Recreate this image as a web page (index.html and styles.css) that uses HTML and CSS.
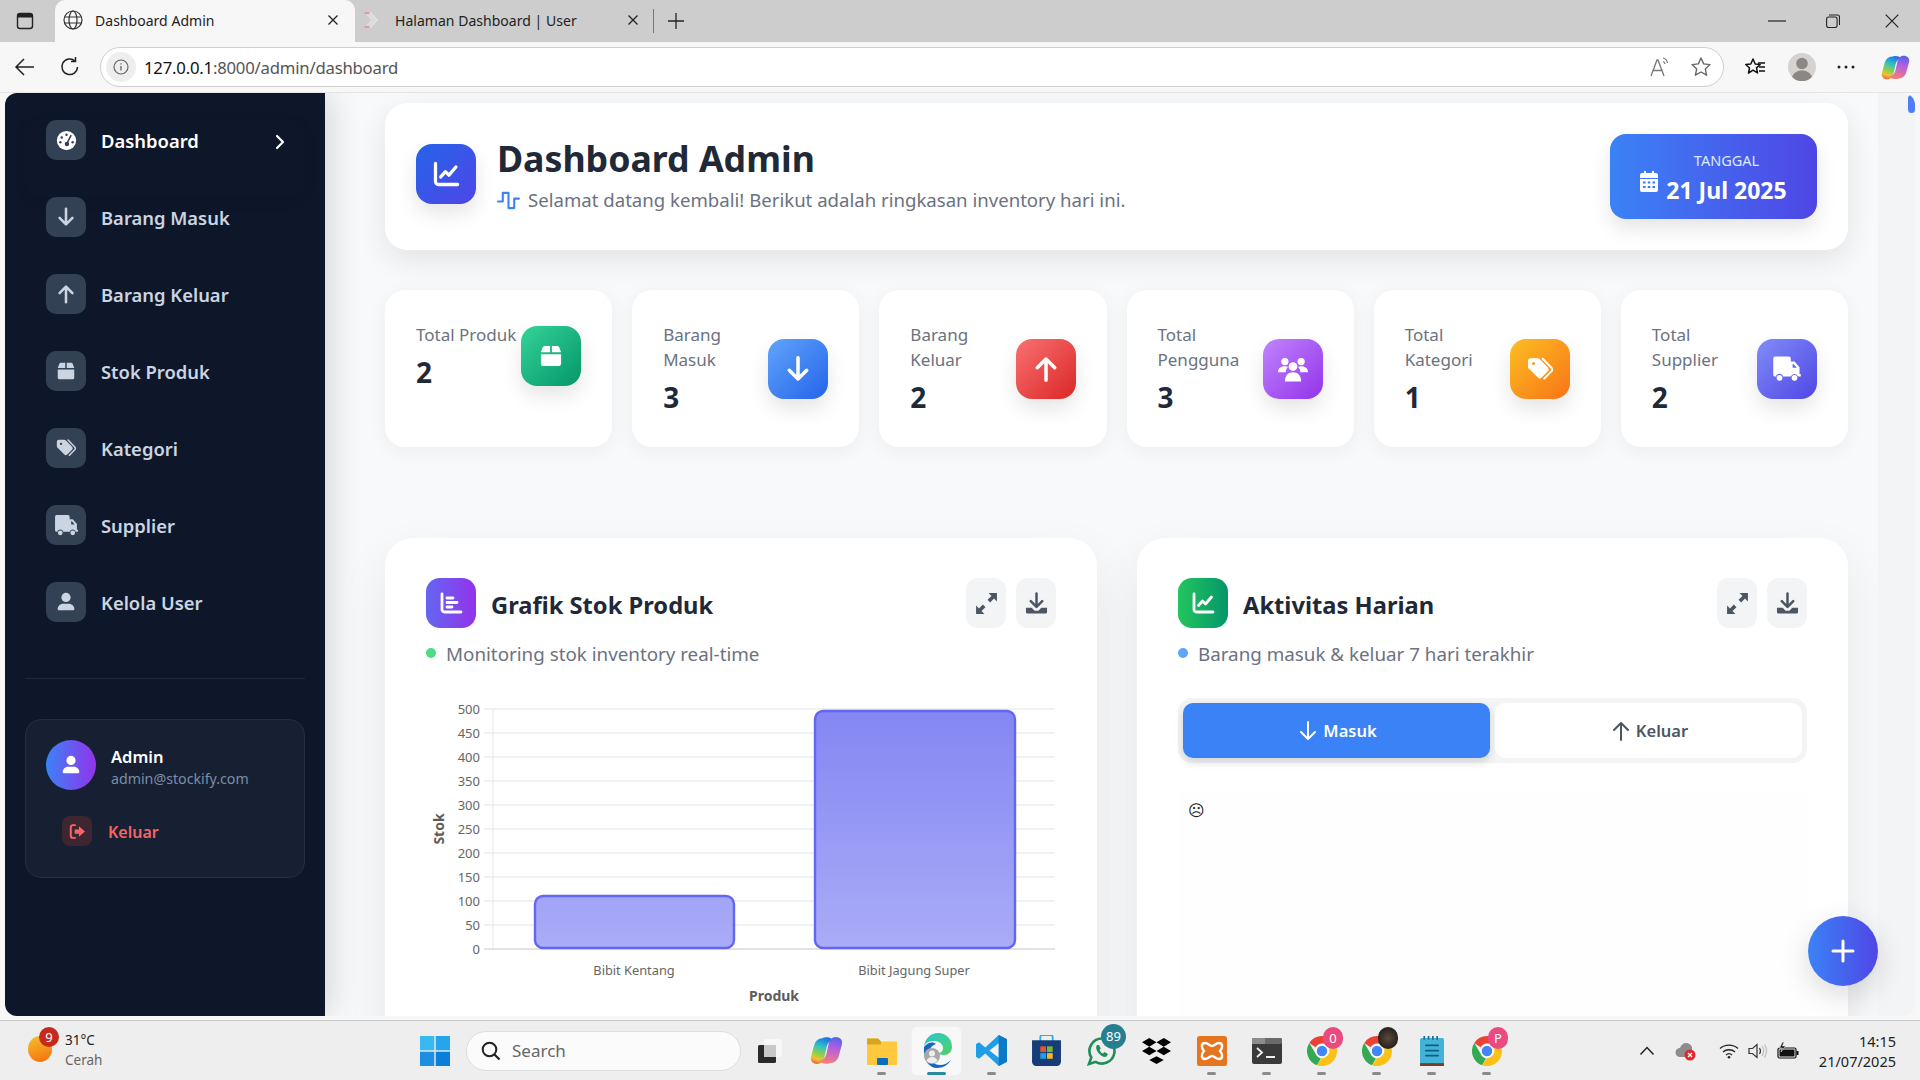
FILE: index.html
```html
<!DOCTYPE html>
<html lang="id">
<head>
<meta charset="utf-8">
<title>Dashboard Admin</title>
<link rel="stylesheet" href="styles.css">
</head>
<body>
<svg class="defs" width="0" height="0" aria-hidden="true">
  <defs>
    <symbol id="i-gauge" viewBox="0 0 24 24"><circle cx="12" cy="12" r="11" fill="currentColor"/><circle cx="12" cy="5.500" r="1.400" fill="#334155"/><circle cx="6.500" cy="8.500" r="1.400" fill="#334155"/><circle cx="5" cy="14" r="1.400" fill="#334155"/><circle cx="19" cy="14" r="1.400" fill="#334155"/><path d="M17 6.500 13.200 14" stroke="#334155" stroke-width="1.800" stroke-linecap="round"/><circle cx="12.500" cy="16" r="2.600" fill="#334155"/></symbol>
    <symbol id="i-down" viewBox="0 0 24 24"><path class="arrow" d="M12 3v17M5 13l7 7 7-7"/></symbol>
    <symbol id="i-up" viewBox="0 0 24 24"><path class="arrow" d="M12 21V4M5 11l7-7 7 7"/></symbol>
    <symbol id="i-box" viewBox="0 0 24 24"><path d="M5 1h6v7H1l2-5.500A2.500 2.500 0 0 1 5 1zM13 1h6a2.500 2.500 0 0 1 2 1.500L23 8H13zM1 10h22v10.500a2.500 2.500 0 0 1-2.500 2.500h-17A2.500 2.500 0 0 1 1 20.500z" fill="currentColor"/></symbol>
    <symbol id="i-tags" viewBox="0 0 24 24"><path d="M1 4.500A2.500 2.500 0 0 1 3.500 2h6.300c.7 0 1.300.3 1.800.7l7.700 7.800a2.500 2.500 0 0 1 0 3.500l-5.800 5.800a2.500 2.500 0 0 1-3.500 0l-7.800-7.700C1.300 11.600 1 11 1 10.300z" fill="currentColor"/><path d="m14.500 2.500 8 8.300a2.500 2.500 0 0 1 0 3.400l-6.500 6.600" fill="none" stroke="currentColor" stroke-width="1.800" stroke-linecap="round"/><circle cx="6" cy="7" r="1.400" fill="var(--hole,#334155)"/></symbol>
    <symbol id="i-truck" viewBox="0 0 24 24"><path d="M1 3.500A1.500 1.500 0 0 1 2.500 2h11A1.500 1.500 0 0 1 15 3.500V6h3l4 4.500V16h1v2h-2.200a3 3 0 0 0-5.700 0H8.900a3 3 0 0 0-5.800 0H2.500A1.500 1.500 0 0 1 1 16.500z" fill="currentColor"/><path d="M16.500 8v3h3.300l-2.600-3z" fill="var(--hole,#334155)"/><circle cx="6" cy="19" r="2.300" fill="currentColor"/><circle cx="18" cy="19" r="2.300" fill="currentColor"/></symbol>
    <symbol id="i-user" viewBox="0 0 24 24"><circle cx="12" cy="6.500" r="5.500" fill="currentColor"/><path d="M8.500 14h7c3.600 0 6.500 2.900 6.500 6.500 0 .8-.7 1.500-1.500 1.500h-17c-.8 0-1.500-.7-1.500-1.500C2 16.900 4.900 14 8.500 14z" fill="currentColor"/></symbol>
    <symbol id="i-users" viewBox="0 0 24 24"><circle cx="5.500" cy="6" r="2.900" fill="currentColor"/><circle cx="18.500" cy="6" r="2.900" fill="currentColor"/><path d="M0 14.500c0-3 2-4.800 5.500-4.800 1 0 1.800.2 2.500.6-1.200 1.100-1.800 2.500-1.800 4.200H0zM24 14.500c0-3-2-4.800-5.500-4.800-1 0-1.800.2-2.500.6 1.200 1.100 1.800 2.500 1.800 4.200H24z" fill="currentColor"/><circle cx="12" cy="10" r="3.500" fill="currentColor"/><path d="M5.500 22c0-5 2.600-7.500 6.500-7.500s6.500 2.500 6.500 7.500z" fill="currentColor"/></symbol>
    <symbol id="i-line" viewBox="0 0 24 24"><path d="M3 3v15.500A2.500 2.500 0 0 0 5.500 21H22" fill="none" stroke="currentColor" stroke-width="2.800" stroke-linecap="round"/><path d="m7.500 14.500 4-4.500 3 3 6-7" fill="none" stroke="currentColor" stroke-width="2.800" stroke-linecap="round" stroke-linejoin="round"/></symbol>
    <symbol id="i-bars" viewBox="0 0 24 24"><path d="M3 3v15.500A2.500 2.500 0 0 0 5.500 21H22" fill="none" stroke="currentColor" stroke-width="2.800" stroke-linecap="round"/><path d="M8 7h6M8 11.500h10M8 16h5" fill="none" stroke="currentColor" stroke-width="2.800" stroke-linecap="round"/></symbol>
    <symbol id="i-expand" viewBox="0 0 24 24"><path d="M14 2h8v8l-2.800-2.800-3.700 3.800-2.500-2.500 3.800-3.700zM10 22H2v-8l2.800 2.800 3.700-3.800 2.500 2.500-3.800 3.700z" fill="currentColor"/></symbol>
    <symbol id="i-download" viewBox="0 0 24 24"><path d="M12 1.500v13M6 9.500l6 6 6-6" fill="none" stroke="currentColor" stroke-width="2.600" stroke-linecap="round" stroke-linejoin="round"/><path d="M1 16.500h6l3 3h4l3-3h6v4.500a1.500 1.500 0 0 1-1.500 1.500h-19A1.500 1.500 0 0 1 1 21z" fill="currentColor"/></symbol>
    <symbol id="i-cal" viewBox="0 0 18 21"><path d="M4 0h2v2h6V0h2v2h2a2 2 0 0 1 2 2v3H0V4a2 2 0 0 1 2-2h2zM0 8h18v11a2 2 0 0 1-2 2H2a2 2 0 0 1-2-2zM3 10.500v2h2.500v-2zm4.800 0v2h2.500v-2zm4.700 0v2H15v-2zM3 15v2h2.500v-2zm4.800 0v2h2.500v-2zm4.700 0v2H15v-2z" fill="currentColor" fill-rule="evenodd"/></symbol>
    <symbol id="i-logout" viewBox="0 0 24 24"><path d="M8.500 3H5.500A3 3 0 0 0 2.500 6v12a3 3 0 0 0 3 3h3" fill="none" stroke="currentColor" stroke-width="2.800" stroke-linecap="round"/><path d="M14 4.500 22.500 12 14 19.500V15H8V9h6z" fill="currentColor"/></symbol>
    <symbol id="i-pulse" viewBox="0 0 24 20"><path d="M1 11h5V2h6v16h6V8h5" fill="none" stroke="currentColor" stroke-width="2.200" stroke-linecap="round" stroke-linejoin="round"/></symbol>
    <symbol id="i-chrome" viewBox="0 0 32 32"><path d="M16 1a15 15 0 0 1 13 7.500H16A7.500 7.500 0 0 0 9.500 12.300L3.300 8A15 15 0 0 1 16 1z" fill="#ea4335"/><path d="M3.300 8l6.300 10.800a7.500 7.500 0 0 0 5.300 4.600L11 30.200A15 15 0 0 1 3.300 8z" fill="#34a853"/><path d="M29 8.500A15 15 0 0 1 11 30.200l5-7.200a7.500 7.500 0 0 0 6.500-11.200z" fill="#fbc116"/><circle cx="16" cy="16" r="6" fill="#4285f4" stroke="#fff" stroke-width="1.500"/></symbol>
    <symbol id="i-copilot" viewBox="0 0 32 28"><path d="M12 2C14 1 18 1 20 2l4 2c-5 0-7 3-8 7l-2 9c-1 4-3 7-7 7-4 0-7-3-6-7L4 9C5 5 8 2 12 2z" fill="url(#cop)"/><path d="M20 26c-2 1-6 1-8 0l-4-2c5 0 7-3 8-7l2-9c1-4 3-7 7-7 4 0 7 3 6 7l-3 11c-1 4-4 7-8 7z" fill="url(#cop2)"/></symbol>
    <linearGradient id="barfill" gradientUnits="userSpaceOnUse" x1="0" y1="9" x2="0" y2="249"><stop offset="0" stop-color="#8486f3"/><stop offset="1" stop-color="#aaacf7"/></linearGradient>
    <linearGradient id="cop" x1=".6" y1="0" x2=".3" y2="1"><stop offset="0" stop-color="#1f6fe6"/><stop offset=".35" stop-color="#2fc0c8"/><stop offset=".65" stop-color="#8fd04a"/><stop offset=".85" stop-color="#f5c12e"/><stop offset="1" stop-color="#ef6a3c"/></linearGradient>
    <linearGradient id="cop2" x1=".6" y1="0" x2=".4" y2="1"><stop offset="0" stop-color="#5a63e6"/><stop offset=".4" stop-color="#b45ee0"/><stop offset="1" stop-color="#f57f7a"/></linearGradient>
    <linearGradient id="edgeg" x1="0" y1="0" x2="1" y2="1"><stop offset="0" stop-color="#2ec6d8"/><stop offset="1" stop-color="#4fd15f"/></linearGradient>
  </defs>
</svg>

<header class="tabstrip">
  <svg class="tabside" viewBox="0 0 20 20" width="20" height="20"><rect x="2.500" y="2.500" width="15" height="15" rx="2.500" fill="none" stroke="#222" stroke-width="1.400"/><path d="M2.500 6.500V5A2.500 2.500 0 0 1 5 2.500h10A2.500 2.500 0 0 1 17.500 5v1.500z" fill="#222"/></svg>
  <div class="tab tab-active">
    <svg viewBox="0 0 20 20" width="20" height="20"><g fill="none" stroke="#333" stroke-width="1.200"><circle cx="10" cy="10" r="9"/><ellipse cx="10" cy="10" rx="4" ry="9"/><path d="M1.500 7h17M1.500 13h17"/></g></svg>
    <span class="tab-title">Dashboard Admin</span>
    <svg class="tab-x" viewBox="0 0 12 12" width="12" height="12"><path d="M1.500 1.500l9 9M10.500 1.500l-9 9" stroke="#222" stroke-width="1.300"/></svg>
  </div>
  <div class="tab">
    <svg viewBox="0 0 20 20" width="20" height="20"><path d="M1 2h7l7 8-7 8H1l7-8z" fill="#dcdcdc"/><path d="M8 2l7 8-7 8h-2l7-8-7-8z" fill="#e0e0e0"/><path d="M1 2h5l1 2H2zM1 18h5l1-2H2z" fill="#e59a9a"/></svg>
    <span class="tab-title">Halaman Dashboard | User</span>
    <svg class="tab-x" viewBox="0 0 12 12" width="12" height="12"><path d="M1.500 1.500l9 9M10.500 1.500l-9 9" stroke="#222" stroke-width="1.300"/></svg>
  </div>
  <span class="tab-sep"></span>
  <svg class="tab-new" viewBox="0 0 18 18" width="18" height="18"><path d="M9 1v16M1 9h16" stroke="#222" stroke-width="1.300"/></svg>
  <div class="winctl">
    <svg class="win-min" viewBox="0 0 20 14" width="20" height="14"><path d="M1 7h18" stroke="#222" stroke-width="1.200"/></svg>
    <svg viewBox="0 0 14 14" width="14" height="14"><rect x=".6" y="3" width="10.500" height="10.500" rx="2" fill="none" stroke="#222" stroke-width="1.100"/><path d="M3 1h8.500A2 2 0 0 1 13.500 3v8" fill="none" stroke="#222" stroke-width="1.100"/></svg>
    <svg viewBox="0 0 14 14" width="14" height="14"><path d="M.7.7l12.600 12.600M13.300.7.700 13.300" stroke="#222" stroke-width="1.200"/></svg>
  </div>
</header>

<nav class="toolbar">
  <svg class="tb-back" viewBox="0 0 22 22" width="22" height="22"><path d="M20 11H2M10 3l-8 8 8 8" fill="none" stroke="#222" stroke-width="1.500"/></svg>
  <svg class="tb-reload" viewBox="0 0 22 22" width="22" height="22"><path d="M18.500 11a7.800 7.800 0 1 1-2.500-6M16.500 1v4.500H12" fill="none" stroke="#222" stroke-width="1.500"/></svg>
  <div class="omnibox">
    <span class="omni-info"><svg viewBox="0 0 16 16" width="16" height="16"><circle cx="8" cy="8" r="7" fill="none" stroke="#666" stroke-width="1.200"/><path d="M8 7v4.500M8 4.200v1.400" stroke="#666" stroke-width="1.300"/></svg></span>
    <span class="url"><span class="url-host">127.0.0.1</span>:8000/admin/dashboard</span>
    <svg class="omni-read" viewBox="0 0 22 20" width="22" height="20"><path d="M1 19 7 3h1l6 16M3.500 13.500h8" fill="none" stroke="#777" stroke-width="1.300"/><path d="M13 1c2.500.6 4 2.200 4.500 5M13 4.500c1.200.3 1.800 1 2 2.500" fill="none" stroke="#777" stroke-width="1.200"/></svg>
    <svg class="omni-star" viewBox="0 0 22 22" width="22" height="22"><path d="m11 2 2.700 5.900 6.300.7-4.700 4.300 1.300 6.300L11 16l-5.600 3.200 1.300-6.300L2 8.600l6.300-.7z" fill="none" stroke="#666" stroke-width="1.400" stroke-linejoin="round"/></svg>
  </div>
  <svg class="tool-fav" viewBox="0 0 22 22" width="22" height="22"><path d="m9 3 2.200 5 5 .5-3.700 3.400 1 5L9 14.200 4.500 17l1-5L1.800 8.500l5-.5z" fill="none" stroke="#111" stroke-width="1.500" stroke-linejoin="round"/><path d="M14 7h7M15 11h6M15 15h6" stroke="#111" stroke-width="1.400"/></svg>
  <span class="tool-profile"><svg viewBox="0 0 28 28" width="28" height="28"><circle cx="14" cy="14" r="14" fill="#d5d3cf"/><circle cx="14" cy="10.500" r="5.800" fill="#8b8782"/><path d="M4 24c2-5 6-6.500 10-6.500S22 19 24 24a14 14 0 0 1-20 0z" fill="#8b8782"/></svg></span>
  <svg class="tool-more" viewBox="0 0 18 6" width="18" height="6"><circle cx="2" cy="3" r="1.500" fill="#222"/><circle cx="9" cy="3" r="1.500" fill="#222"/><circle cx="16" cy="3" r="1.500" fill="#222"/></svg>
  <svg class="tool-copilot" width="29" height="27"><use href="#i-copilot"/></svg>
</nav>

<div class="viewport">
  <aside class="sidebar">
    <ul class="menu">
      <li class="menu-item menu-active"><span class="menu-ic"><svg width="21" height="21"><use href="#i-gauge"/></svg></span><span class="menu-label">Dashboard</span><svg class="menu-chev" viewBox="0 0 10 16" width="10" height="16"><path d="m2 2 6 6-6 6" fill="none" stroke="#fff" stroke-width="2.200" stroke-linecap="round" stroke-linejoin="round"/></svg></li>
      <li class="menu-item"><span class="menu-ic"><svg width="22" height="22"><use href="#i-down"/></svg></span><span class="menu-label">Barang Masuk</span></li>
      <li class="menu-item"><span class="menu-ic"><svg width="22" height="22"><use href="#i-up"/></svg></span><span class="menu-label">Barang Keluar</span></li>
      <li class="menu-item"><span class="menu-ic"><svg width="18" height="18"><use href="#i-box"/></svg></span><span class="menu-label">Stok Produk</span></li>
      <li class="menu-item"><span class="menu-ic"><svg width="20" height="20"><use href="#i-tags"/></svg></span><span class="menu-label">Kategori</span></li>
      <li class="menu-item"><span class="menu-ic"><svg width="25" height="25"><use href="#i-truck"/></svg></span><span class="menu-label">Supplier</span></li>
      <li class="menu-item"><span class="menu-ic"><svg width="20" height="20"><use href="#i-user"/></svg></span><span class="menu-label">Kelola User</span></li>
    </ul>
    <div class="side-div"></div>
    <div class="user-card">
      <div class="user-row">
        <span class="avatar"><svg width="20" height="20"><use href="#i-user"/></svg></span>
        <div class="user-text"><div class="user-name">Admin</div><div class="user-mail">admin@stockify.com</div></div>
      </div>
      <div class="logout"><span class="logout-ic"><svg width="17" height="17"><use href="#i-logout"/></svg></span><span>Keluar</span></div>
    </div>
  </aside>

  <main class="main">
    <section class="hero">
      <span class="hero-ic"><svg width="28" height="28"><use href="#i-line"/></svg></span>
      <div class="hero-text">
        <h1>Dashboard Admin</h1>
        <p><svg width="23" height="19"><use href="#i-pulse"/></svg><span>Selamat datang kembali! Berikut adalah ringkasan inventory hari ini.</span></p>
      </div>
      <div class="date-chip">
        <svg width="18" height="21"><use href="#i-cal"/></svg>
        <div class="date-text"><div class="date-cap">TANGGAL</div><div class="date-val">21 Jul 2025</div></div>
      </div>
    </section>

    <section class="stats">
      <article class="stat"><div class="stat-row"><div class="stat-text"><div class="stat-label">Total Produk</div><div class="stat-val">2</div></div><span class="stat-ic g-green"><svg width="22" height="22"><use href="#i-box"/></svg></span></div></article>
      <article class="stat"><div class="stat-row"><div class="stat-text"><div class="stat-label">Barang Masuk</div><div class="stat-val">3</div></div><span class="stat-ic g-blue"><svg width="30" height="30"><use href="#i-down"/></svg></span></div></article>
      <article class="stat"><div class="stat-row"><div class="stat-text"><div class="stat-label">Barang Keluar</div><div class="stat-val">2</div></div><span class="stat-ic g-red"><svg width="30" height="30"><use href="#i-up"/></svg></span></div></article>
      <article class="stat"><div class="stat-row"><div class="stat-text"><div class="stat-label">Total Pengguna</div><div class="stat-val">3</div></div><span class="stat-ic g-purple"><svg width="30" height="30"><use href="#i-users"/></svg></span></div></article>
      <article class="stat"><div class="stat-row"><div class="stat-text"><div class="stat-label">Total Kategori</div><div class="stat-val">1</div></div><span class="stat-ic g-orange"><svg width="26" height="26"><use href="#i-tags"/></svg></span></div></article>
      <article class="stat"><div class="stat-row"><div class="stat-text"><div class="stat-label">Total Supplier</div><div class="stat-val">2</div></div><span class="stat-ic g-indigo"><svg width="30" height="30"><use href="#i-truck"/></svg></span></div></article>
    </section>

    <section class="charts">
      <article class="chart-card">
        <div class="chart-head">
          <span class="chart-ic g-violet"><svg width="24" height="24"><use href="#i-bars"/></svg></span>
          <h2>Grafik Stok Produk</h2>
          <div class="chart-btns"><span class="cbtn"><svg width="25" height="25"><use href="#i-expand"/></svg></span><span class="cbtn"><svg width="23" height="23"><use href="#i-download"/></svg></span></div>
        </div>
        <p class="chart-sub"><i class="dot dot-green"></i>Monitoring stok inventory real-time</p>
        <svg class="stock-chart" viewBox="0 0 630 310" width="630" height="310">
          <g stroke="#eceded" stroke-width="1.300">
            <path d="M58 9H629M58 33H629M58 57H629M58 81H629M58 105H629M58 129H629M58 153H629M58 177H629M58 201H629M58 225H629"/>
            <path d="M67 9V249"/>
          </g>
          <path d="M58 249H629" stroke="#d9dadc" stroke-width="1.300"/>
          <g class="axis-y" text-anchor="end">
            <text x="54" y="14">500</text><text x="54" y="38">450</text><text x="54" y="62">400</text><text x="54" y="86">350</text><text x="54" y="110">300</text><text x="54" y="134">250</text><text x="54" y="158">200</text><text x="54" y="182">150</text><text x="54" y="206">100</text><text x="54" y="230">50</text><text x="54" y="254">0</text>
          </g>
          <rect x="109" y="196" width="199" height="52" rx="8" fill="url(#barfill)" stroke="#6366f1" stroke-width="2.400"/>
          <rect x="389" y="11" width="200" height="237" rx="8" fill="url(#barfill)" stroke="#6366f1" stroke-width="2.400"/>
          <g class="axis-x" text-anchor="middle"><text x="208" y="275">Bibit Kentang</text><text x="488" y="275">Bibit Jagung Super</text></g>
          <text class="axis-t" x="348" y="301" text-anchor="middle">Produk</text>
          <text class="axis-t" transform="translate(18 129) rotate(-90)" text-anchor="middle">Stok</text>
        </svg>
      </article>

      <article class="chart-card">
        <div class="chart-head">
          <span class="chart-ic g-emerald"><svg width="24" height="24"><use href="#i-line"/></svg></span>
          <h2>Aktivitas Harian</h2>
          <div class="chart-btns"><span class="cbtn"><svg width="25" height="25"><use href="#i-expand"/></svg></span><span class="cbtn"><svg width="23" height="23"><use href="#i-download"/></svg></span></div>
        </div>
        <p class="chart-sub"><i class="dot dot-blue"></i>Barang masuk &amp; keluar 7 hari terakhir</p>
        <div class="toggle">
          <button class="tg tg-on"><svg width="24" height="24"><use href="#i-down"/></svg>Masuk</button>
          <button class="tg"><svg width="24" height="24"><use href="#i-up"/></svg>Keluar</button>
        </div>
        <div class="empty-chart">☹</div>
      </article>
    </section>
  </main>

  <div class="scrolltrack"><span class="thumb"></span></div>
  <button class="fab"><svg viewBox="0 0 24 24" width="24" height="24"><path d="M12 2v20M2 12h20" stroke="#fff" stroke-width="3" stroke-linecap="round"/></svg></button>
</div>

<footer class="taskbar">
  <div class="weather">
    <span class="sun"></span><span class="sun-badge">9</span>
    <div class="weather-text"><div>31°C</div><div class="muted">Cerah</div></div>
  </div>
  <svg class="winlogo" viewBox="0 0 30 30" width="30" height="30"><path d="M0 0h14.300v14.300H0z" fill="#38b9f0"/><path d="M15.700 0H30v14.300H15.700z" fill="#27a5ea"/><path d="M0 15.700h14.300V30H0z" fill="#1c8fe0"/><path d="M15.700 15.700H30V30H15.700z" fill="#0a7fd8"/></svg>
  <div class="search"><svg viewBox="0 0 20 20" width="20" height="20"><circle cx="8.500" cy="8.500" r="6.800" fill="none" stroke="#222" stroke-width="2"/><path d="m13.500 13.500 5 5" stroke="#222" stroke-width="2.200"/></svg><span>Search</span></div>
  <div class="apps">
    <span class="app app-first"><svg viewBox="0 0 24 24" width="24" height="24"><rect x="0" y="6" width="18" height="18" rx="1.500" fill="#2a2a2a"/><rect x="6" y="0" width="18" height="18" rx="1.500" fill="#f8f8f8" opacity=".9"/><rect x="6" y="6" width="12" height="12" fill="#c8c8c8"/></svg></span>
    <span class="app app-second"><svg width="33" height="31"><use href="#i-copilot"/></svg></span>
    <span class="app app-on"><svg viewBox="0 0 30 28" width="30" height="28"><path d="M0 1.500h11l3 3h16V28H0z" fill="#ffc83d"/><path d="M0 1.500h11l3 3v3H0z" fill="#d9a520"/><rect x="10" y="21" width="11" height="7" rx="1" fill="#0c6cc0"/></svg></span>
    <span class="app app-edge app-on"><svg viewBox="0 0 30 36" width="30" height="36"><path d="M2 14C3 5 9 0 16 0c8 0 14 6 14 14 0 5-4 8-8 8-3 0-5-1-6-2 3 0 5-2 5-5 0-4-4-7-9-7C7 8 3 10 2 14z" fill="url(#edgeg)"/><path d="M2 14c3-4 8-6 12-3-4 1-7 5-7 10 0 6 5 11 11 11 4 0 8-2 11-5-3 5-8 8-14 8C7 35 1 27 2 14z" fill="#1667c5"/><circle cx="10" cy="23" r="8" fill="#a8a8a8"/><circle cx="10" cy="20.500" r="3" fill="#eee"/><path d="M4.500 28c1-3 3-4 5.500-4s4.500 1 5.500 4a8 8 0 0 1-11 0z" fill="#eee"/></svg></span>
    <span class="app app-on"><svg viewBox="0 0 30 30" width="31" height="31"><path d="M22 0 30 4v22l-8 4-13-12-6 5-3-2v-12l3-2 6 5z" fill="#1e9de8"/><path d="M22 8v14l-9-7z" fill="#f2f2f2"/><path d="M22 0l8 4v22l-8 4z" fill="#0b79c6"/></svg></span>
    <span class="app"><svg viewBox="0 0 28 30" width="29" height="31"><path d="M8 6V2a2 2 0 0 1 2-2h8a2 2 0 0 1 2 2v4" fill="none" stroke="#2db0e6" stroke-width="1.800"/><path d="M0 5h28v21a4 4 0 0 1-4 4H4a4 4 0 0 1-4-4z" fill="#173d78"/><rect x="8" y="11" width="5.500" height="5.500" fill="#e8542a"/><rect x="14.500" y="11" width="5.500" height="5.500" fill="#7cb82a"/><rect x="8" y="17.500" width="5.500" height="5.500" fill="#1da1e4"/><rect x="14.500" y="17.500" width="5.500" height="5.500" fill="#f8b81e"/></svg></span>
    <span class="app"><svg viewBox="0 0 30 30" width="30" height="30"><path d="M15 2.500a12.500 12.500 0 0 0-10.700 19L2 28l6.700-2.200A12.500 12.500 0 1 0 15 2.500z" fill="none" stroke="#1f8d57" stroke-width="2.600"/><path d="M10 9c-1.500 2-1 5 2 8.500s6 4 7.500 3l1.500-2.500-3.500-2-1.500 1.500c-1.500-.5-3-2-3.500-3.500l1.300-1.500-1.800-3.500z" fill="#1f8d57"/></svg><span class="app-badge b-teal">89</span></span>
    <span class="app"><svg viewBox="0 0 32 30" width="29" height="26" preserveAspectRatio="none"><path d="M8 0l8 5-8 5-8-5zM24 0l8 5-8 5-8-5zM8 10l8 5-8 5-8-5zM24 10l8 5-8 5-8-5zM16 21l8 4.500-8 4.500-8-4.500z" fill="#000"/></svg></span>
    <span class="app app-on"><svg viewBox="0 0 30 30" width="30" height="30"><rect width="30" height="30" rx="2.500" fill="#e5761f"/><path d="M8 7c3 0 4.500 3 7 3s4-3 7-3c4 0 4 5 1 8 3 3 3 8-1 8-3 0-4.500-3-7-3s-4 3-7 3c-4 0-4-5-1-8-3-3-3-8 1-8z" fill="none" stroke="#fff" stroke-width="2.400"/></svg></span>
    <span class="app app-on"><svg viewBox="0 0 30 26" width="30" height="26"><rect width="30" height="26" rx="2" fill="#3a3a3a"/><rect width="30" height="6" rx="2" fill="#6a6a6a"/><rect width="13" height="6" fill="#8c8c8c"/><path d="m5 10 5 4.500-5 4.500" fill="none" stroke="#f0f0f0" stroke-width="1.800"/><path d="M14 19h9" stroke="#f0f0f0" stroke-width="2"/></svg></span>
    <span class="app app-on"><svg width="32" height="32"><use href="#i-chrome"/></svg><span class="app-badge b-pink">0</span></span>
    <span class="app app-on"><svg width="32" height="32"><use href="#i-chrome"/></svg><span class="app-badge b-dark"></span></span>
    <span class="app app-on"><svg viewBox="0 0 28 32" width="24" height="30" preserveAspectRatio="none"><rect y="2" width="28" height="30" rx="2" fill="#43b3d8"/><rect y="29" width="28" height="3" fill="#7a3c22"/><path d="M6 10h16M6 15.500h16M6 21h16" stroke="#0d5f86" stroke-width="1.800"/><path d="M5 0v4M10 0v4M15 0v4M20 0v4" stroke="#1b6f97" stroke-width="2"/></svg></span>
    <span class="app app-on"><svg width="32" height="32"><use href="#i-chrome"/></svg><span class="app-badge b-pink">P</span></span>
  </div>
  <div class="tray">
    <svg viewBox="0 0 16 10" width="16" height="10"><path d="m1.500 8.500 6.500-7 6.500 7" fill="none" stroke="#222" stroke-width="1.500"/></svg>
    <svg class="tray-cloud" viewBox="0 0 22 20" width="22" height="20"><path d="M5 16a4.500 4.500 0 0 1 0-9c1-3 3-5 6-5 3 0 5 2 6 4v5l-5 5z" fill="#8d8d8d"/><circle cx="15" cy="14" r="5.500" fill="#e0282e"/><path d="m13 12 4 4m0-4-4 4" stroke="#fff" stroke-width="1.400"/></svg>
    <svg class="tray-wifi" viewBox="0 0 20 16" width="20" height="16"><path d="M1 5.500c5-4.500 13-4.500 18 0M4 9c3.300-3 8.700-3 12 0M7 12c1.700-1.500 4.300-1.500 6 0" fill="none" stroke="#222" stroke-width="1.300"/><circle cx="10" cy="14.300" r="1.300" fill="#222"/></svg>
    <svg class="tray-vol" viewBox="0 0 20 16" width="20" height="16"><path d="M1 5.500h3.500L9 1.500v13l-4.500-4H1z" fill="none" stroke="#333" stroke-width="1.200"/><path d="M11.500 5c1.200 1.800 1.200 4.200 0 6" fill="none" stroke="#333" stroke-width="1.200"/><path d="M14 3c2 3 2 7 0 10M16.500 1.500c2.500 4 2.500 9 0 13" fill="none" stroke="#bdbdbd" stroke-width="1.200"/></svg>
    <svg class="tray-bat" viewBox="0 0 22 18" width="22" height="18"><path d="M2.500 6h15a1.500 1.500 0 0 1 1.500 1.500v7a1.500 1.500 0 0 1-1.500 1.500h-15A1.500 1.500 0 0 1 1 14.500v-7A1.500 1.500 0 0 1 2.500 6z" fill="none" stroke="#111" stroke-width="1.200"/><rect x="2.500" y="7.500" width="15" height="7" fill="#111"/><rect x="19.500" y="9" width="2" height="4" fill="#111"/><path d="M5.500 0 2.500 6h3l-1.500 4 4.500-6H5.500l1.500-4z" fill="#111" stroke="#eee" stroke-width=".6"/></svg>
    <div class="clock"><div>14:15</div><div>21/07/2025</div></div>
  </div>
</footer>
</body>
</html>
```

FILE: styles.css
```css
* { box-sizing: border-box; }
html, body { margin: 0; padding: 0; }
body {
  width: 1920px; height: 1080px; overflow: hidden;
  display: flex; flex-direction: column;
  background: #f7f7f7;
  font-family: "Noto Sans", "Open Sans", sans-serif;
  color: #1f2937;
}
h1, h2, p, ul { margin: 0; padding: 0; }
ul { list-style: none; }
svg { display: block; flex: none; }
.defs { position: absolute; }
.arrow { fill: none; stroke: currentColor; stroke-width: var(--sw, 2.800); stroke-linecap: round; stroke-linejoin: round; }

/* browser chrome */
.tabstrip { height: 42px; background: #cdcdcd; display: flex; align-items: center; flex: none; padding-left: 15px; }
.tabside { margin-right: 20px; }
.tab { width: 300px; height: 42px; display: flex; align-items: center; padding: 0 16px 2px 8px; gap: 12px; font-size: 14px; color: #222; }
.tab-active { background: #f7f7f7; border-radius: 10px 10px 0 0; }
.tab-title { flex: 1; white-space: nowrap; letter-spacing: .03px; }
.tab-sep { width: 1px; height: 24px; background: #777; margin-left: -2px; }
.tab-new { margin-left: 13px; }
.winctl { margin-left: auto; display: flex; align-items: center; gap: 45px; padding-right: 21px; }
.win-min { margin-right: -6px; }
.toolbar { height: 51px; flex: none; background: #f7f7f7; border-bottom: 1px solid #e4e4e4; display: flex; align-items: center; }
.tb-back { margin-left: 14px; }
.tb-reload { margin-left: 23px; }
.omnibox { margin-left: 19px; width: 1624px; height: 40px; border: 1.500px solid #cfcfcf; border-radius: 20px; background: #fff; display: flex; align-items: center; padding-left: 5px; }
.omni-info { width: 30px; height: 30px; border-radius: 15px; background: #eee; display: flex; align-items: center; justify-content: center; }
.url { margin-left: 8px; font-size: 16.700px; color: #555; letter-spacing: -.2px; }
.url-host { color: #111; }
.omni-read { margin-left: auto; }
.omni-star { margin-left: 18px; margin-right: 11px; }
.tool-fav { margin-left: 20px; }
.tool-profile { margin-left: 22px; }
.tool-more { margin-left: 21px; }
.tool-copilot { margin-left: 26px; }

/* viewport */
.viewport { position: relative; flex: none; height: 923px; margin: 0 5px; display: flex; background: #f8f9fb; border-radius: 12px; overflow: hidden; }
.sidebar { width: 320px; flex: none; background: #0e172a; padding: 27px 20px 0; box-shadow: 6px 0 30px rgba(0,0,0,.14); position: relative; z-index: 2; }
.menu { display: flex; flex-direction: column; }
.menu-item { height: 77px; display: flex; align-items: flex-start; padding: 0 21px; font-size: 18.400px; font-weight: 600; color: #cbd5e1; }
.menu-active { color: #fff; box-shadow: 0 4px 14px rgba(0,0,0,.06); border-radius: 14px; }
.menu-ic { width: 40px; height: 40px; border-radius: 10px; background: #334155; display: flex; align-items: center; justify-content: center; margin-right: 15px; flex: none; }
.menu-label { line-height: 42px; }
.menu-chev { margin-left: auto; margin-top: 14px; margin-right: -1px; }
.side-div { height: 1px; background: #1e293b; margin-top: 19px; }
.user-card { margin-top: 40px; height: 159px; background: #162032; border: 1px solid #222e42; border-radius: 16px; padding: 20px; }
.user-row { display: flex; align-items: center; gap: 15px; }
.avatar { width: 50px; height: 50px; border-radius: 50%; background: linear-gradient(90deg, #3b82f6, #9333ea); display: flex; align-items: center; justify-content: center; color: #fff; flex: none; }
.user-text { padding-top: 3px; }
.user-name { font-size: 16.500px; font-weight: 600; color: #fff; line-height: 24px; }
.user-mail { font-size: 14.200px; color: #7a8ea8; line-height: 20px; }
.logout { display: flex; align-items: center; gap: 16px; margin: 26px 0 0 16px; font-size: 16px; font-weight: 600; color: #f56565; }
.logout > span:last-child { padding-top: 2px; }
.logout-ic { width: 30px; height: 30px; border-radius: 8px; background: #3d2630; display: flex; align-items: center; justify-content: center; }

/* main */
.main { flex: 1; min-width: 0; padding: 10px 30px 0 60px; overflow: hidden; background: #f8f9fb; }
.hero { height: 147px; background: #fff; border-radius: 22px; box-shadow: 0 10px 30px rgba(0,0,0,.09); display: flex; align-items: center; padding: 0 31px; }
.hero-ic { width: 60px; height: 60px; border-radius: 16px; background: linear-gradient(135deg, #2563eb, #4f46e5); box-shadow: 0 10px 20px rgba(0,0,0,.1); color: #fff; display: flex; align-items: center; justify-content: center; margin: -5px 21px 0 0; }
.hero-text { margin-bottom: 2px; }
.hero-text h1 { font-size: 35.700px; line-height: 44px; font-weight: 700; color: #1f2937; }
.hero-text p { display: flex; align-items: center; gap: 8px; font-size: 18.600px; line-height: 30px; margin-top: 5px; color: #6b7280; }
.hero-text p svg { color: #3b82f6; }
.date-chip { margin-left: auto; width: 207px; height: 85px; border-radius: 16px; background: linear-gradient(90deg, #3b82f6, #4f46e5); box-shadow: 0 10px 20px rgba(0,0,0,.1); color: #fff; display: flex; align-items: center; padding-left: 30px; gap: 7px; }
.date-chip > svg { margin-top: 10px; }
.date-text { text-align: center; flex: 1; padding-right: 29px; }
.date-cap { font-size: 14.500px; line-height: 24px; color: #dbeafe; }
.date-val { font-size: 23px; line-height: 32px; font-weight: 700; margin-top: 2px; white-space: nowrap; }
.stats { display: grid; grid-template-columns: repeat(6, 1fr); gap: 20px; margin-top: 40px; }
.stat { height: 157px; background: #fff; border-radius: 20px; box-shadow: 0 4px 20px rgba(0,0,0,.05); padding: 32px 31px 0; }
.stat-row { display: flex; align-items: center; justify-content: space-between; gap: 4px; }
.stat-text { min-width: 0; }
.stat-label { font-size: 17px; line-height: 25px; color: #6b7280; }
.stat-val { font-size: 28px; line-height: 36px; font-weight: 700; margin-top: 7px; color: #1f2937; }
.stat-ic { width: 60px; height: 60px; flex: none; border-radius: 16px; color: #fff; display: flex; align-items: center; justify-content: center; box-shadow: 0 10px 20px rgba(0,0,0,.1); --hole: #fff; }
.g-green { background: linear-gradient(135deg, #34d399, #059669); }
.g-blue { background: linear-gradient(135deg, #60a5fa, #2563eb); }
.g-red { background: linear-gradient(135deg, #f87171, #dc2626); }
.g-purple { background: linear-gradient(135deg, #c084fc, #9333ea); }
.g-orange { background: linear-gradient(135deg, #fbbf24, #f97316); --hole: #fb9a1c; }
.g-indigo { background: linear-gradient(135deg, #818cf8, #4f46e5); --hole: #6a66ee; }
.g-violet { background: linear-gradient(90deg, #6366f1, #9333ea); }
.g-emerald { background: linear-gradient(90deg, #22c55e, #059669); }
.charts { display: grid; grid-template-columns: 1fr 1fr; gap: 40px; margin-top: 91px; }
.chart-card { background: #fff; border-radius: 28px; box-shadow: 0 20px 50px rgba(0,0,0,.08); padding: 40px 41px 40px; height: 560px; }
.chart-head { display: flex; align-items: center; height: 50px; }
.chart-ic { width: 50px; height: 50px; border-radius: 14px; color: #fff; display: flex; align-items: center; justify-content: center; margin-right: 15px; }
.chart-head h2 { font-size: 23.700px; font-weight: 700; color: #1f2937; line-height: 50px; padding-top: 4px; }
.chart-btns { margin-left: auto; display: flex; gap: 10px; }
.cbtn { width: 40px; height: 50px; border-radius: 12px; background: #f3f4f6; color: #4b5563; display: flex; align-items: center; justify-content: center; }
.chart-sub { display: flex; align-items: center; font-size: 18.800px; line-height: 26px; margin-top: 13px; color: #6b7280; }
.dot { width: 10px; height: 10px; border-radius: 50%; margin: -3px 10px 0 0; flex: none; }
.dot-green { background: #4ade80; }
.dot-blue { background: #60a5fa; }
.stock-chart { margin-top: 33px; }
.axis-y text, .axis-x text { font-family: "Noto Sans", sans-serif; font-size: 13px; fill: #666; }
.axis-x text { font-size: 12.800px; }
.axis-t { font-family: "Noto Sans", sans-serif; font-size: 14px; font-weight: 700; fill: #5c5c5c; }
.toggle { margin-top: 31px; height: 65px; padding: 5px; background: #f3f4f6; border-radius: 14px; display: flex; gap: 5px; --sw: 2; }
.tg { flex: 1; border: 0; border-radius: 10px; background: #fff; color: #4b5563; font: 600 16.500px "Noto Sans", sans-serif; display: flex; align-items: center; justify-content: center; gap: 3px; padding: 0; }
.tg-on { background: #3b82f6; color: #fff; box-shadow: 0 4px 10px rgba(0,0,0,.14); }
.empty-chart { margin-top: 29px; height: 300px; background: #fefefe; padding: 7px 10px; font: 16px/24px "DejaVu Sans", sans-serif; color: #222; }
.scrolltrack { width: 37px; flex: none; background: #f3f4f6; display: flex; justify-content: flex-end; }
.thumb { width: 7px; height: 18px; margin-top: 2px; border-radius: 4px; background: #4f7dfb; }
.fab { position: absolute; right: 37px; bottom: 30px; width: 70px; height: 70px; border: 0; border-radius: 50%; background: linear-gradient(90deg, #3b82f6, #4f46e5); box-shadow: 0 10px 30px rgba(0,0,0,.15); display: flex; align-items: center; justify-content: center; z-index: 3; padding: 0; }

/* taskbar */
.taskbar { margin-top: 4px; height: 60px; flex: none; background: #eeeeee; border-top: 1.500px solid #c9c9c9; display: flex; align-items: center; font-size: 14px; color: #222; }
.weather { position: relative; display: flex; align-items: center; width: 420px; padding-left: 65px; padding-bottom: 2px; flex: none; }
.sun { position: absolute; left: 28px; top: 6px; width: 24px; height: 26px; border-radius: 50%; background: linear-gradient(160deg, #f4c22e, #f56d0c); }
.sun-badge { position: absolute; left: 39px; top: -3px; width: 20px; height: 20px; border-radius: 50%; background: #c42b1c; color: #fff; font-size: 13px; line-height: 20px; text-align: center; }
.weather-text { line-height: 20px; font-size: 13.500px; }
.muted { color: #666; }
.winlogo { margin-left: 0; }
.search { margin-left: 16px; width: 275px; height: 40px; border-radius: 20px; background: #fbfbfb; border: 1px solid #dedede; display: flex; align-items: center; padding-left: 14px; gap: 11px; font-size: 17px; color: #666; }
.apps { display: flex; margin-left: 1px; }
.app { position: relative; width: 55px; height: 48px; display: flex; align-items: center; justify-content: center; border-radius: 5px; }
.app-second { margin-left: 2px; }
.app-on::after { content: ""; position: absolute; left: 23px; top: 45px; width: 9px; height: 3.500px; border-radius: 2px; background: #8b8b8b; }
.app-edge { background: #f8f8f8; margin: 0 3px; width: 49px; box-shadow: 0 0 0 1px #f0f0f0; }
.app-edge::after { left: 15px; width: 19px; background: #2b8a9b; }
.app-badge { position: absolute; right: 6px; top: 0; min-width: 20px; height: 22px; padding: 0 3px; border-radius: 11px; color: #fff; font-size: 13px; line-height: 22px; text-align: center; }
.b-teal { background: #267f90; right: 3px; top: -3px; min-width: 25px; height: 25px; line-height: 25px; border-radius: 13px; }
.b-pink { background: #ea4a80; }
.b-dark { background: radial-gradient(circle, #5a4a3a, #111); }
.tray { margin-left: auto; display: flex; align-items: center; padding-right: 24px; }
.tray-cloud { margin-left: 20px; }
.tray-wifi { margin-left: 22px; }
.tray-vol { margin-left: 9px; }
.tray-bat { margin-left: 9px; }
.clock { margin-left: 20px; text-align: right; font-size: 14.500px; line-height: 20px; color: #222; }
```
